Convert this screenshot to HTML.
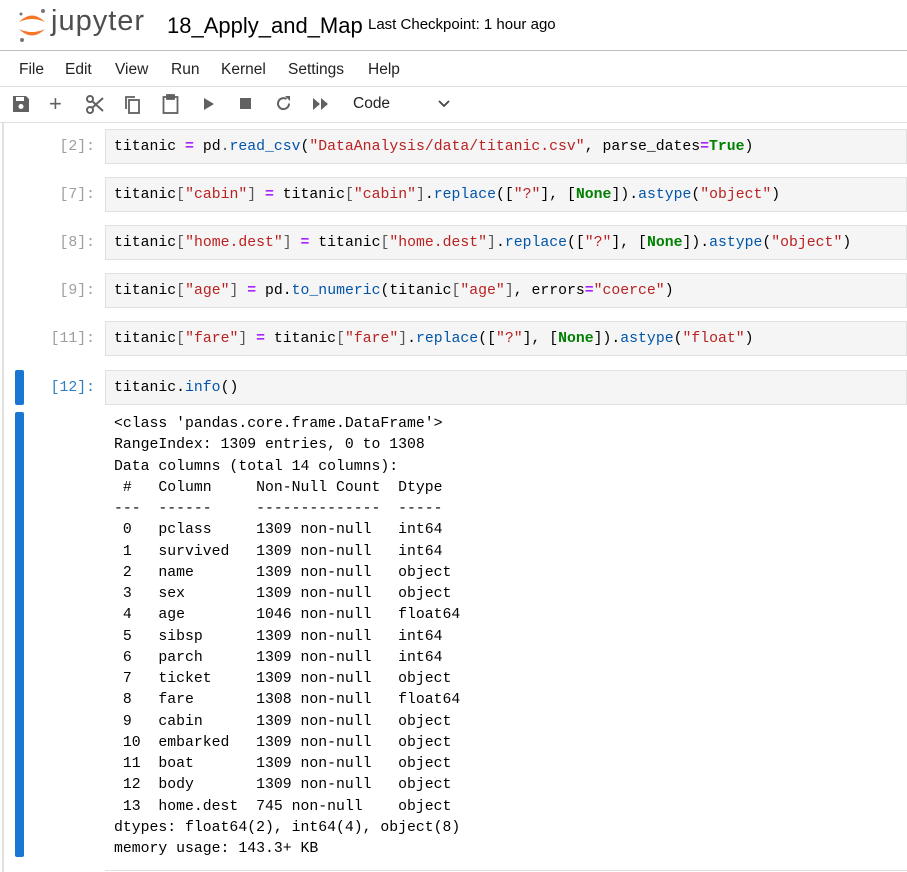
<!DOCTYPE html>
<html><head><meta charset="utf-8"><style>
*{margin:0;padding:0;box-sizing:border-box}
body{width:907px;height:872px;overflow:hidden;background:#fff;font-family:"Liberation Sans",sans-serif;position:relative;color:#000}
.abs{position:absolute}
.mono{font-family:"Liberation Mono","DejaVu Sans Mono",monospace;font-size:14.8px;white-space:pre}
.cell{position:absolute;left:105px;width:802px;height:35px;background:#f5f5f5;border:1px solid #e0e0e0;padding-left:8px;line-height:34px}
.pr{position:absolute;width:95px;left:0;text-align:right;color:#9e9e9e;line-height:36px}
.s{color:#ba2121}.o{color:#aa22ff;font-weight:bold}.k{color:#008000;font-weight:bold}.b{color:#555}.f{color:#0055aa}
.menu span{position:absolute;top:61px;font-size:15.5px;color:#222}
svg{position:absolute}
</style></head><body>
<!-- header -->
<svg style="left:16px;top:6px" width="32" height="38" viewBox="0 0 32 38">
<path d="M3 16 Q16 3 29 16 Q16 10 3 16Z" fill="#f37726"/>
<path d="M3 23 Q16 36 29 23 Q16 29 3 23Z" fill="#f37726"/>
<circle cx="27" cy="5" r="2" fill="#767677"/><circle cx="5" cy="8" r="1.5" fill="#767677"/><circle cx="6" cy="34" r="2" fill="#767677"/>
</svg>
<div class="abs" style="left:51px;top:5px;font-size:29px;color:#4e4e4e;letter-spacing:1px">jupyter</div>
<div class="abs" style="left:167px;top:13px;font-size:22px;color:#000">18_Apply_and_Map</div>
<div class="abs" style="left:368px;top:16px;font-size:15px;color:#000">Last Checkpoint: 1 hour ago</div>
<div class="abs" style="left:0;top:50px;width:907px;height:1px;background:#bdbdbd"></div>
<div class="menu"><span style="left:19px">File</span><span style="left:65px">Edit</span><span style="left:115px">View</span><span style="left:171px">Run</span><span style="left:221px">Kernel</span><span style="left:288px">Settings</span><span style="left:368px">Help</span></div>
<div class="abs" style="left:0;top:86px;width:907px;height:1px;background:#e0e0e0"></div>
<!-- toolbar -->
<svg style="left:12px;top:95px" width="18" height="18" viewBox="0 0 18 18"><path d="M1 1h13l3 3v13H1z" fill="#616161"/><rect x="4" y="2" width="8" height="4" fill="#fff"/><circle cx="9" cy="11.5" r="2.5" fill="#fff"/></svg>
<div class="abs" style="left:49px;top:91px;font-size:22px;color:#616161">+</div>
<svg style="left:86px;top:95px" width="19" height="19" viewBox="0 0 19 19" fill="none" stroke="#616161" stroke-width="2"><circle cx="4" cy="4" r="3"/><circle cx="4" cy="15" r="3"/><path d="M6 6L17 16M6 13L17 3"/></svg>
<svg style="left:124px;top:95px" width="17" height="19" viewBox="0 0 17 19" fill="none" stroke="#616161" stroke-width="1.8"><path d="M2 14V2h9"/><rect x="5" y="5" width="10" height="13"/></svg>
<svg style="left:162px;top:94px" width="17" height="20" viewBox="0 0 17 20" fill="none" stroke="#616161" stroke-width="1.8"><rect x="1.5" y="3" width="14" height="16"/><rect x="5" y="1" width="7" height="4" fill="#616161"/></svg>
<svg style="left:203px;top:97px" width="12" height="14"><path d="M1 1L11 7L1 13Z" fill="#616161"/></svg>
<div class="abs" style="left:240px;top:98px;width:11px;height:11px;background:#616161"></div>
<svg style="left:275px;top:95px" width="17" height="17" viewBox="0 0 17 17" fill="none" stroke="#616161" stroke-width="2"><path d="M14 8.5A5.5 5.5 0 1 1 11.5 4"/><path d="M10 1h5v5z" fill="#616161" stroke="none"/></svg>
<svg style="left:313px;top:98px" width="16" height="12"><path d="M0 0L7 6L0 12ZM8 0L15 6L8 12Z" fill="#616161"/></svg>
<div class="abs" style="left:353px;top:95px;font-size:15.5px;color:#222">Code</div>
<svg style="left:438px;top:100px" width="12" height="8"><path d="M1 1L6 6L11 1" fill="none" stroke="#444" stroke-width="1.8"/></svg>
<div class="abs" style="left:0;top:122px;width:907px;height:1px;background:#e0e0e0"></div>
<div class="abs" style="left:2px;top:123px;width:2px;height:749px;background:#e0e0e0"></div>
<!-- cells -->
<div class="mono pr" style="top:129px">[2]:</div>
<div class="cell mono" style="top:129px">titanic <span class="o">=</span> pd<span class="b">.</span><span class="f">read_csv</span>(<span class="s">"DataAnalysis/data/titanic.csv"</span>, parse_dates<span class="o">=</span><span class="k">True</span>)</div>
<div class="mono pr" style="top:177px">[7]:</div>
<div class="cell mono" style="top:177px">titanic<span class="b">[</span><span class="s">"cabin"</span><span class="b">]</span> <span class="o">=</span> titanic<span class="b">[</span><span class="s">"cabin"</span><span class="b">]</span>.<span class="f">replace</span>([<span class="s">"?"</span>], [<span class="k">None</span>]).<span class="f">astype</span>(<span class="s">"object"</span>)</div>
<div class="mono pr" style="top:225px">[8]:</div>
<div class="cell mono" style="top:225px">titanic<span class="b">[</span><span class="s">"home.dest"</span><span class="b">]</span> <span class="o">=</span> titanic<span class="b">[</span><span class="s">"home.dest"</span><span class="b">]</span>.<span class="f">replace</span>([<span class="s">"?"</span>], [<span class="k">None</span>]).<span class="f">astype</span>(<span class="s">"object"</span>)</div>
<div class="mono pr" style="top:273px">[9]:</div>
<div class="cell mono" style="top:273px">titanic<span class="b">[</span><span class="s">"age"</span><span class="b">]</span> <span class="o">=</span> pd.<span class="f">to_numeric</span>(titanic<span class="b">[</span><span class="s">"age"</span><span class="b">]</span>, errors<span class="o">=</span><span class="s">"coerce"</span>)</div>
<div class="mono pr" style="top:321px">[11]:</div>
<div class="cell mono" style="top:321px">titanic<span class="b">[</span><span class="s">"fare"</span><span class="b">]</span> <span class="o">=</span> titanic<span class="b">[</span><span class="s">"fare"</span><span class="b">]</span>.<span class="f">replace</span>([<span class="s">"?"</span>], [<span class="k">None</span>]).<span class="f">astype</span>(<span class="s">"float"</span>)</div>
<div class="abs" style="left:15px;top:370px;width:9px;height:35px;background:#1976d2;border-radius:2px"></div>
<div class="mono pr" style="top:370px;color:#307fc1">[12]:</div>
<div class="cell mono" style="top:370px">titanic.<span class="f">info</span>()</div>
<div class="abs" style="left:15px;top:412px;width:9px;height:445px;background:#1976d2;border-radius:2px"></div>
<div class="abs mono" style="left:114px;top:414px;line-height:21.25px;color:#000">&lt;class 'pandas.core.frame.DataFrame'&gt;
RangeIndex: 1309 entries, 0 to 1308
Data columns (total 14 columns):
 #   Column     Non-Null Count  Dtype  
---  ------     --------------  -----  
 0   pclass     1309 non-null   int64  
 1   survived   1309 non-null   int64  
 2   name       1309 non-null   object 
 3   sex        1309 non-null   object 
 4   age        1046 non-null   float64
 5   sibsp      1309 non-null   int64  
 6   parch      1309 non-null   int64  
 7   ticket     1309 non-null   object 
 8   fare       1308 non-null   float64
 9   cabin      1309 non-null   object 
 10  embarked   1309 non-null   object 
 11  boat       1309 non-null   object 
 12  body       1309 non-null   object 
 13  home.dest  745 non-null    object 
dtypes: float64(2), int64(4), object(8)
memory usage: 143.3+ KB</div>
<div class="abs" style="left:105px;top:870px;width:802px;height:1px;background:#e0e0e0"></div>
</body></html>
